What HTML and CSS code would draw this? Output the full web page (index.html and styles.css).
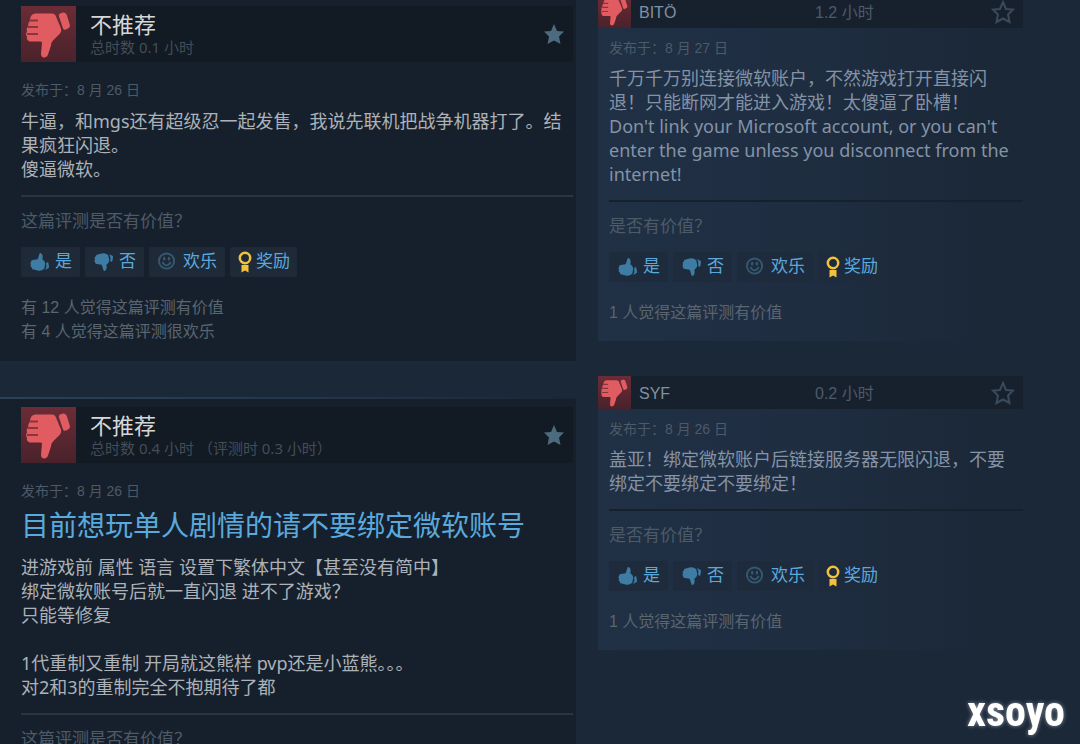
FILE: index.html
```html
<!DOCTYPE html>
<html lang="zh-CN">
<head>
    <meta charset="UTF-8">
    <meta name="viewport" content="width=device-width, initial-scale=1.0">
    <title>评测</title>
    <link rel="stylesheet" href="styles.css">
</head>
<body>
    <!-- shared icons -->
    <svg class="sprite" aria-hidden="true">
        <symbol id="thumb-big" viewBox="0 0 55 55">
            <path d="M14 7H31Q34 7 35 10L40 22Q41 25 39 27L32 34Q30 36 30 39L27 48Q26 51 23 51Q20 51 20 47L21 36Q21 35 19 35H9Q5 34 6 30Q4 28 6 25Q5 22 7 20Q7 16 9 14Q9 8 14 7Z"/>
            <path d="M39 7L42 6Q45 6 46 9L49 19Q49 21 47 22L45 23Q43 24 42 22L38 10Q37 8 39 7Z"/>
            <path class="crease" d="M8 14H17M7 20.500H17M6 27.500H17"/>
        </symbol>
        <symbol id="thumb" viewBox="0 0 20 20">
            <path d="M10 1Q11 0 12 1Q14 3 13 7L15 9Q16 10 16 12L15 17Q12 20 8 19L4 18Q2 18 2 16Q0 15 1 13Q0 11 1 10Q1 8 3 8L8 7Q9 5 9.500 3Z"/>
            <path d="M17 11L19 10Q20 13 20 16L16 18.500Q18 15 17 11Z"/>
        </symbol>
        <symbol id="smile" viewBox="0 0 20 20">
            <circle cx="9" cy="9" r="8" fill="none" stroke="currentColor" stroke-width="2"/>
            <path d="M4.500 10Q9 17 13.500 10" fill="none" stroke="currentColor" stroke-width="1.800"/>
            <ellipse cx="6.500" cy="6.500" rx="1.300" ry="2"/>
            <ellipse cx="11.500" cy="6.500" rx="1.300" ry="2"/>
        </symbol>
        <symbol id="award" viewBox="0 0 14 22">
            <circle cx="7" cy="7" r="5.200" fill="none" stroke="currentColor" stroke-width="2.500"/>
            <path d="M3.500 14H10.500V21.500L7 19.500L3.500 21.500Z"/>
        </symbol>
        <symbol id="star" viewBox="0 0 24 24">
            <path d="M12 2L15 9L22 9.500L17 14.500L18.500 22L12 18.500L5.500 22L7 14.500L2 9.500L9 9Z"/>
        </symbol>
    </svg>

    <main class="page">
        <section class="column">
            <article class="review">
                <header class="review-header">
                    <svg class="rating"><use href="#thumb-big"/></svg>
                    <div class="summary">
                        <h2>不推荐</h2>
                        <p>总时数 0.1 小时</p>
                    </div>
                    <button class="star" aria-label="收藏"><svg><use href="#star"/></svg></button>
                </header>
                <p class="date">发布于：8 月 26 日</p>
                <p class="text">牛逼，和mgs还有超级忍一起发售，我说先联机把战争机器打了。结果疯狂闪退。<br>傻逼微软。</p>
                <hr>
                <p class="question">这篇评测是否有价值？</p>
                <div class="votes">
                    <button><svg><use href="#thumb"/></svg>是</button>
                    <button><svg class="down"><use href="#thumb"/></svg>否</button>
                    <button><svg class="smile"><use href="#smile"/></svg>欢乐</button>
                    <button class="award"><svg><use href="#award"/></svg>奖励</button>
                </div>
                <p class="counts">有 12 人觉得这篇评测有价值<br>有 4 人觉得这篇评测很欢乐</p>
            </article>

            <article class="review lined">
                <header class="review-header">
                    <svg class="rating"><use href="#thumb-big"/></svg>
                    <div class="summary">
                        <h2>不推荐</h2>
                        <p>总时数 0.4 小时 （评测时 0.3 小时）</p>
                    </div>
                    <button class="star" aria-label="收藏"><svg><use href="#star"/></svg></button>
                </header>
                <p class="date">发布于：8 月 26 日</p>
                <h3>目前想玩单人剧情的请不要绑定微软账号</h3>
                <p class="text">进游戏前 属性 语言 设置下繁体中文【甚至没有简中】<br>绑定微软账号后就一直闪退 进不了游戏？<br>只能等修复<br><br>1代重制又重制 开局就这熊样 pvp还是小蓝熊。。。<br>对2和3的重制完全不抱期待了都</p>
                <hr>
                <p class="question">这篇评测是否有价值？</p>
            </article>
        </section>

        <section class="column recent">
            <article class="short-review">
                <header class="short-header">
                    <svg class="rating"><use href="#thumb-big"/></svg>
                    <h2>BITÖ</h2>
                    <span class="hours">1.2 小时</span>
                    <button class="star outline" aria-label="收藏"><svg><use href="#star"/></svg></button>
                </header>
                <div class="short-body">
                    <p class="date">发布于：8 月 27 日</p>
                    <p class="text">千万千万别连接微软账户，不然游戏打开直接闪退！只能断网才能进入游戏！太傻逼了卧槽！<br>Don't link your Microsoft account, or you can't enter the game unless you disconnect from the internet!</p>
                    <hr>
                    <p class="question">是否有价值？</p>
                    <div class="votes">
                        <button><svg><use href="#thumb"/></svg>是</button>
                        <button><svg class="down"><use href="#thumb"/></svg>否</button>
                        <button><svg class="smile"><use href="#smile"/></svg>欢乐</button>
                        <button class="award"><svg><use href="#award"/></svg>奖励</button>
                    </div>
                    <p class="counts">1 人觉得这篇评测有价值</p>
                </div>
            </article>

            <article class="short-review">
                <header class="short-header">
                    <svg class="rating"><use href="#thumb-big"/></svg>
                    <h2>SYF</h2>
                    <span class="hours">0.2 小时</span>
                    <button class="star outline" aria-label="收藏"><svg><use href="#star"/></svg></button>
                </header>
                <div class="short-body">
                    <p class="date">发布于：8 月 26 日</p>
                    <p class="text">盖亚！绑定微软账户后链接服务器无限闪退，不要绑定不要绑定不要绑定！</p>
                    <hr>
                    <p class="question">是否有价值？</p>
                    <div class="votes">
                        <button><svg><use href="#thumb"/></svg>是</button>
                        <button><svg class="down"><use href="#thumb"/></svg>否</button>
                        <button><svg class="smile"><use href="#smile"/></svg>欢乐</button>
                        <button class="award"><svg><use href="#award"/></svg>奖励</button>
                    </div>
                    <p class="counts">1 人觉得这篇评测有价值</p>
                </div>
            </article>
        </section>
    </main>
    <div class="watermark">xsoyo</div>
</body>
</html>
```
FILE: styles.css
```css
:root {
    --page: #1b2838;
    --card: #16202c;
    --card-header: #121a23;
    --text: #acb2b8;
    --text-dim: #4d5a68;
    --blue: #5aa9dc;
    --icon-blue: #3f7ca3;
    --body-font: "Noto Sans", "Noto Sans CJK SC", sans-serif;
    --ui-font: "Liberation Sans", "Noto Sans CJK SC", sans-serif;
}

* {
    margin: 0;
    padding: 0;
    box-sizing: border-box;
}

body {
    height: 100vh;
    overflow: hidden;
    background: var(--page);
    color: var(--text);
    font-family: var(--ui-font);
}

.sprite {
    position: absolute;
    width: 0;
    height: 0;
}

svg {
    display: block;
    flex: none;
    fill: currentColor;
}

button {
    border: none;
    background: none;
    font-family: inherit;
    cursor: pointer;
}

.page {
    display: grid;
    grid-template-columns: 576fr 504fr;
}

.column {
    display: flex;
    flex-direction: column;
    gap: 36px;
}

.recent {
    gap: 35px;
    padding: 0 57px 0 22px;
    margin-top: -5px;
}

/* left column */
.review {
    padding: 6px 3px 17px 21px;
    background: var(--card);
}

.lined {
    padding-top: 8px;
    border-top: 2px solid;
    border-image: linear-gradient(90deg, #2b4158, #233449 60%, #1a2635) 1;
}

.review-header {
    display: flex;
    align-items: center;
    height: 56px;
    background: var(--card-header);
}

.rating {
    color: #e05c60;
    background: linear-gradient(#6b2c36, #4a222b);
}

.review-header .rating {
    width: 55px;
    height: 56px;
}

.crease {
    stroke: #8a343d;
    stroke-width: 2;
}

.summary {
    flex: 1;
    margin-left: 14px;
    padding-bottom: 2px;
    font-family: var(--body-font);
}

.summary h2 {
    font-size: 22px;
    font-weight: 400;
    line-height: 28px;
    color: #d6d7d8;
}

.summary p {
    font-size: 15px;
    line-height: 18px;
    color: #434d59;
}

.star {
    color: #4d6b7e;
}

.star svg {
    width: 24px;
    height: 24px;
}

.review-header .star {
    margin-right: 7px;
}

.outline svg {
    fill: none;
    stroke: #3a4a5b;
    stroke-width: 2;
}

.date {
    margin-top: 18px;
    font-size: 14px;
    line-height: 20px;
    color: var(--text-dim);
}

.review h3 {
    margin-top: 8px;
    margin-bottom: 10px;
    font-size: 28px;
    font-weight: 400;
    line-height: 36px;
    color: var(--blue);
}

.text {
    margin-top: 9px;
    font-family: var(--body-font);
    font-size: 18px;
    line-height: 24px;
}

hr {
    height: 2px;
    margin-top: 14px;
    border: none;
    background: #2a3541;
}

.question {
    margin-top: 15px;
    font-size: 17px;
    line-height: 20px;
    color: var(--text-dim);
}

.votes {
    display: flex;
    gap: 5px;
    margin-top: 15px;
}

.votes button {
    display: flex;
    align-items: center;
    gap: 6px;
    height: 30px;
    padding: 0 8px 0 9px;
    border-radius: 2px;
    background: #1f2a39;
    font-size: 17px;
    line-height: 24px;
    color: var(--blue);
}

.votes svg {
    width: 19px;
    height: 20px;
    color: var(--icon-blue);
}

.votes .down {
    transform: scaleY(-1);
}

.votes .smile {
    color: #345970;
}

.votes .award {
    gap: 4px;
    padding: 0 7px 0 8px;
}

.votes .award svg {
    width: 14px;
    height: 22px;
    color: #f2c23a;
}

.counts {
    margin-top: 19px;
    font-size: 16px;
    line-height: 24px;
    color: #5a6570;
}

/* right column */
.short-review {
    background: linear-gradient(90deg, #203045, #1f2d41 50%, #1b2838 90%);
}

.short-header {
    display: grid;
    grid-template-columns: 33px 1fr 1fr auto;
    column-gap: 8px;
    align-items: center;
    height: 33px;
    padding-right: 8px;
    background: #17212e;
}

.short-header .rating {
    width: 33px;
    height: 33px;
}

.short-header h2,
.hours {
    padding-top: 2px;
    font-size: 16px;
    font-weight: 400;
    line-height: 24px;
    color: #8091a2;
}

.hours {
    color: #4d5a6a;
}

.short-body {
    padding: 0 0 16px 11px;
}

.short-body .date {
    padding-top: 10px;
    margin-top: 0;
}

.short-body .text {
    margin-top: 8px;
    padding-right: 6px;
    color: #8493a6;
}

.short-body hr {
    background: #17212e;
}

.short-body .votes button {
    background: #1e2b3d;
}

.watermark {
    position: fixed;
    right: 15px;
    bottom: 8px;
    font-family: "Liberation Sans Narrow", "Roboto Condensed", "Roboto", sans-serif;
    font-size: 42px;
    font-weight: 700;
    line-height: 48px;
    color: #fff;
    text-shadow: 0 0 4px #8f99a3;
}
```
